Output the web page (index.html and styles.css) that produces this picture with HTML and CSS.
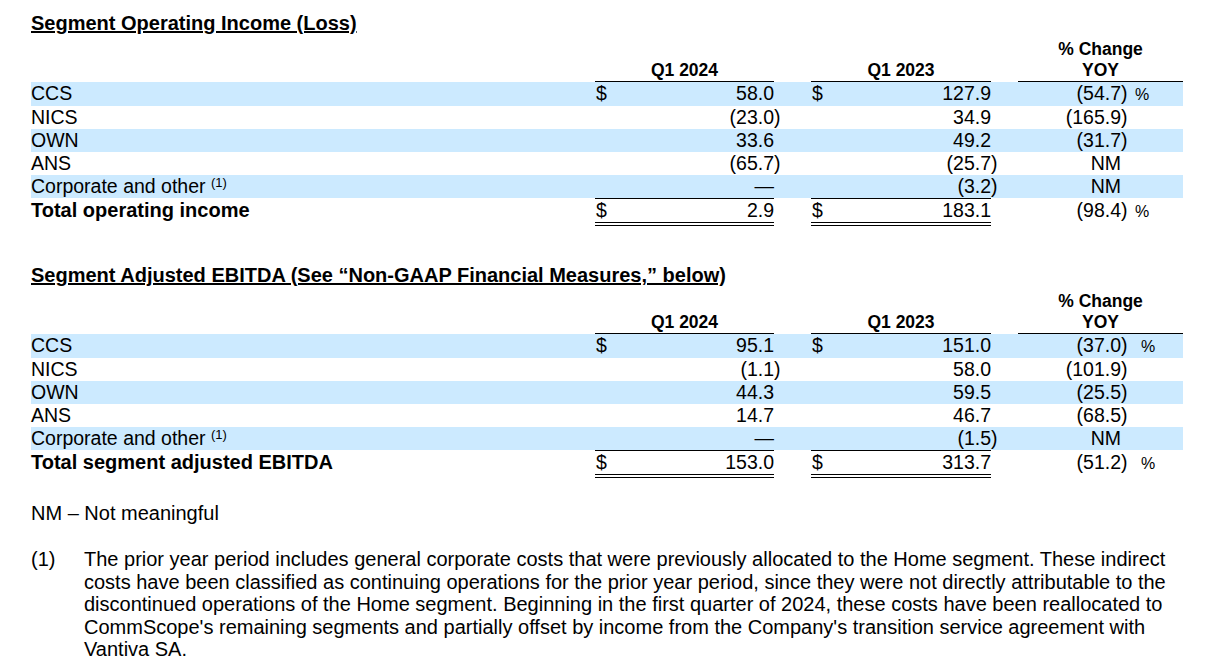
FILE: index.html
```html
<!DOCTYPE html>
<html>
<head>
<meta charset="utf-8">
<link rel="stylesheet" href="styles.css">
</head>
<body>
<div class="page">
  <section class="seg">
    <h2 class="title">Segment Operating Income (Loss)</h2>
    <table class="fin">
      <colgroup>
        <col class="c-label"><col class="c-money"><col class="c-gap1"><col class="c-money2"><col class="c-gap2"><col class="c-pv"><col class="c-ps">
      </colgroup>
      <thead>
        <tr>
          <th></th>
          <th class="hd">Q1 2024</th>
          <th></th>
          <th class="hd">Q1 2023</th>
          <th></th>
          <th class="hd" colspan="2">% Change<br>YOY</th>
        </tr>
      </thead>
      <tbody>
        <tr class="band">
          <td>CCS</td>
          <td class="m"><span class="cur">$</span>58.0</td><td></td>
          <td class="m"><span class="cur">$</span>127.9</td><td></td>
          <td class="pv">(54.7<span class="rp">)</span></td><td class="ps">%</td>
        </tr>
        <tr>
          <td>NICS</td>
          <td class="m">(23.0<span class="rp">)</span></td><td></td>
          <td class="m">34.9</td><td></td>
          <td class="pv">(165.9<span class="rp">)</span></td><td class="ps"></td>
        </tr>
        <tr class="band">
          <td>OWN</td>
          <td class="m">33.6</td><td></td>
          <td class="m">49.2</td><td></td>
          <td class="pv">(31.7<span class="rp">)</span></td><td class="ps"></td>
        </tr>
        <tr>
          <td>ANS</td>
          <td class="m">(65.7<span class="rp">)</span></td><td></td>
          <td class="m">(25.7<span class="rp">)</span></td><td></td>
          <td class="pv">NM</td><td class="ps"></td>
        </tr>
        <tr class="band">
          <td>Corporate and other <sup>(1)</sup></td>
          <td class="m">—</td><td></td>
          <td class="m">(3.2<span class="rp">)</span></td><td></td>
          <td class="pv">NM</td><td class="ps"></td>
        </tr>
        <tr class="total">
          <td class="tl">Total operating income</td>
          <td class="m"><span class="cur">$</span>2.9</td><td></td>
          <td class="m"><span class="cur">$</span>183.1</td><td></td>
          <td class="pv">(98.4<span class="rp">)</span></td><td class="ps">%</td>
        </tr>
      </tbody>
    </table>
  </section>

  <section class="seg seg2">
    <h2 class="title">Segment Adjusted EBITDA (See “Non-GAAP Financial Measures,” below)</h2>
    <table class="fin">
      <colgroup>
        <col class="c-label"><col class="c-money"><col class="c-gap1"><col class="c-money2"><col class="c-gap2"><col class="c-pv"><col class="c-ps">
      </colgroup>
      <thead>
        <tr>
          <th></th>
          <th class="hd">Q1 2024</th>
          <th></th>
          <th class="hd">Q1 2023</th>
          <th></th>
          <th class="hd" colspan="2">% Change<br>YOY</th>
        </tr>
      </thead>
      <tbody>
        <tr class="band">
          <td>CCS</td>
          <td class="m"><span class="cur">$</span>95.1</td><td></td>
          <td class="m"><span class="cur">$</span>151.0</td><td></td>
          <td class="pv">(37.0<span class="rp">)</span></td><td class="ps wide">%</td>
        </tr>
        <tr>
          <td>NICS</td>
          <td class="m">(1.1<span class="rp">)</span></td><td></td>
          <td class="m">58.0</td><td></td>
          <td class="pv">(101.9<span class="rp">)</span></td><td class="ps"></td>
        </tr>
        <tr class="band">
          <td>OWN</td>
          <td class="m">44.3</td><td></td>
          <td class="m">59.5</td><td></td>
          <td class="pv">(25.5<span class="rp">)</span></td><td class="ps"></td>
        </tr>
        <tr>
          <td>ANS</td>
          <td class="m">14.7</td><td></td>
          <td class="m">46.7</td><td></td>
          <td class="pv">(68.5<span class="rp">)</span></td><td class="ps"></td>
        </tr>
        <tr class="band">
          <td>Corporate and other <sup>(1)</sup></td>
          <td class="m">—</td><td></td>
          <td class="m">(1.5<span class="rp">)</span></td><td></td>
          <td class="pv">NM</td><td class="ps"></td>
        </tr>
        <tr class="total">
          <td class="tl">Total segment adjusted EBITDA</td>
          <td class="m"><span class="cur">$</span>153.0</td><td></td>
          <td class="m"><span class="cur">$</span>313.7</td><td></td>
          <td class="pv">(51.2<span class="rp">)</span></td><td class="ps wide">%</td>
        </tr>
      </tbody>
    </table>
  </section>

  <p class="nm">NM – Not meaningful</p>

  <div class="note">
    <span class="note-num">(1)</span>
    <p class="note-text">The prior year period includes general corporate costs that were previously allocated to the Home segment. These indirect costs have been classified as continuing operations for the prior year period, since they were not directly attributable to the discontinued operations of the Home segment. Beginning in the first quarter of 2024, these costs have been reallocated to CommScope's remaining segments and partially offset by income from the Company's transition service agreement with Vantiva SA.</p>
  </div>
</div>
</body>
</html>
```

FILE: styles.css
```css
html, body {
  margin: 0;
  padding: 0;
  background: #ffffff;
}

body {
  font-family: "Liberation Sans", Arial, sans-serif;
  color: #000000;
  font-size: 19.5px;
}

.page {
  width: 1152px;
  padding: 12px 0 0 31px;
}

.title {
  margin: 0;
  font-size: 20px;
  font-weight: bold;
  line-height: 23px;
  text-decoration: underline;
  text-decoration-thickness: 2px;
  text-underline-offset: 1px;
}

.fin {
  margin-top: 4px;
  border-collapse: separate;
  border-spacing: 0;
  table-layout: fixed;
  width: 1152px;
}

.c-label { width: 564px; }
.c-money { width: 179px; }
.c-gap1 { width: 37px; }
.c-money2 { width: 180px; }
.c-gap2 { width: 27px; }
.c-pv { width: 103px; }
.c-ps { width: 62px; }

.fin th {
  padding: 0;
  font-size: 17.5px;
  font-weight: bold;
  line-height: 21px;
  text-align: center;
  vertical-align: bottom;
}

.fin th.hd {
  border-bottom: 1px solid #000;
}

.fin td {
  padding: 0;
  height: 23px;
  line-height: 23px;
  white-space: nowrap;
  vertical-align: baseline;
}

.band td {
  background: #cceaff;
}

.m {
  text-align: right;
}

.cur {
  float: left;
  margin-left: 1px;
}

.rp {
  margin-right: -6.5px;
}

.pv {
  text-align: right;
}

.ps {
  padding-left: 14px !important;
  font-size: 16px;
}

.ps.wide {
  padding-left: 20px !important;
}

sup {
  font-size: 13px;
  line-height: 0;
  vertical-align: 6px;
}

.total .tl {
  font-weight: bold;
  font-size: 20px;
}

.total .m {
  border-top: 1px solid #000;
  border-bottom: 4px double #000;
}

.seg2 {
  margin-top: 38px;
}

.nm {
  margin: 24px 0 0 0;
  font-size: 20px;
  line-height: 23px;
}

.note {
  display: grid;
  grid-template-columns: 53px 1099px;
  margin-top: 23px;
  font-size: 20px;
  line-height: 22.6px;
}

.note-text {
  margin: 0;
}
```
